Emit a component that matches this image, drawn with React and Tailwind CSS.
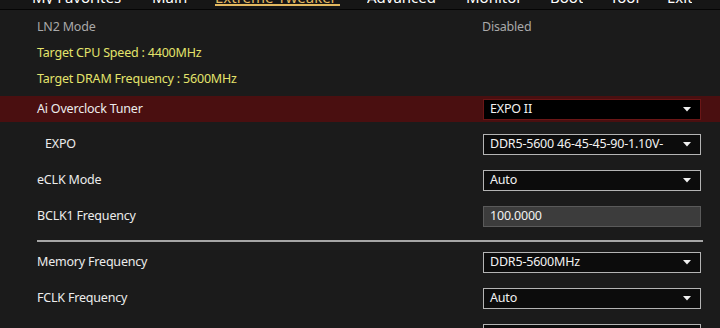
import React from "react";

const Arrow = () => (
  <svg width="8" height="5" viewBox="0 0 8 5" className="shrink-0">
    <path d="M0 0 L8 0 L4 4.5 Z" fill="#f0f0f0" />
  </svg>
);

function Dropdown({ value, active }) {
  return (
    <div
      className={
        "w-[218px] h-[21px] flex items-center justify-between pl-[6px] pr-[9px] text-[#f2f2f2] " +
        (active
          ? "bg-black border border-[#6a1616]"
          : "bg-[#0c0c0c] border border-[#b4b4b4]")
      }
    >
      <span className="whitespace-nowrap">{value}</span>
      <Arrow />
    </div>
  );
}

function Input({ value }) {
  return (
    <div className="w-[218px] h-[21px] flex items-center pl-[6px] bg-[#3c3c3c] border border-[#5a5a5a] text-[#f2f2f2]">
      {value}
    </div>
  );
}

function Row({ label, children, indent, active, className = "" }) {
  return (
    <div
      className={
        "h-[26px] flex items-center " +
        (active ? "bg-[#4a0f10] " : "") +
        className
      }
    >
      <div className={"flex-1 text-[#ececec] " + (indent ? "pl-[45px]" : "pl-[37px]")}>
        {label}
      </div>
      <div className="w-[237px] shrink-0">{children}</div>
    </div>
  );
}

const tabs = [
  ["My Favorites", "ml-[32px] w-[91px]"],
  ["Main", "ml-[29px] w-[35px]"],
  ["Extreme Tweaker", "ml-[28px] w-[125px]"],
  ["Advanced", "ml-[27px] w-[71px]"],
  ["Monitor", "ml-[28px] w-[62px]"],
  ["Boot", "ml-[22px] w-[33px]"],
  ["Tool", "ml-[27px] w-[30px]"],
  ["Exit", "ml-[27px] w-[25px]"],
];

export default function App() {
  return (
    <div
      className="w-[720px] h-[328px] overflow-hidden bg-[#1b1b1b] text-[12.5px] tracking-[-0.2px] leading-none"
      style={{ fontFamily: '"Noto Sans", sans-serif' }}
    >
      <div className="h-[10px] overflow-hidden bg-[#161616] border-b border-[#050505]">
        <div className="flex -mt-[9px] text-[15px] tracking-normal text-white whitespace-nowrap">
          {tabs.map(([t, cls]) => (
            <div
              key={t}
              className={
                "shrink-0 flex flex-col " + cls + (t === "Extreme Tweaker" ? " text-[#e2b860]" : "")
              }
            >
              <span className="leading-[13px] overflow-hidden">{t}</span>
              {t === "Extreme Tweaker" && <div className="h-[2px] bg-[#e2b860]" />}
            </div>
          ))}
        </div>
      </div>
      <div className="h-[4px]" />
      <div className="h-[26px] flex items-center">
        <div className="flex-1 pl-[37px] text-[#a9a9a9]">LN2 Mode</div>
        <div className="w-[238px] text-[#a9a9a9]">Disabled</div>
      </div>
      <div className="h-[26px] flex items-center pl-[37px] text-[#e4e46c]">
        Target CPU Speed : 4400MHz
      </div>
      <div className="h-[26px] flex items-center pl-[37px] text-[#e4e46c]">
        Target DRAM Frequency : 5600MHz
      </div>
      <Row label="Ai Overclock Tuner" active className="mt-[4px]">
        <Dropdown value="EXPO II" active />
      </Row>
      <Row label="EXPO" indent className="mt-[9px]">
        <Dropdown value="DDR5-5600 46-45-45-90-1.10V-" />
      </Row>
      <Row label="eCLK Mode" className="mt-[10px]">
        <Dropdown value="Auto" />
      </Row>
      <Row label="BCLK1 Frequency" className="mt-[10px]">
        <Input value="100.0000" />
      </Row>
      <div className="mt-[11px] ml-[37px] mr-[17px] h-[2px] bg-[#a6a6a6]" />
      <Row label="Memory Frequency" className="mt-[7px]">
        <Dropdown value="DDR5-5600MHz" />
      </Row>
      <Row label="FCLK Frequency" className="mt-[10px]">
        <Dropdown value="Auto" />
      </Row>
      <Row label="Command Rate" className="mt-[10px]">
        <Dropdown value="Auto" />
      </Row>
    </div>
  );
}
